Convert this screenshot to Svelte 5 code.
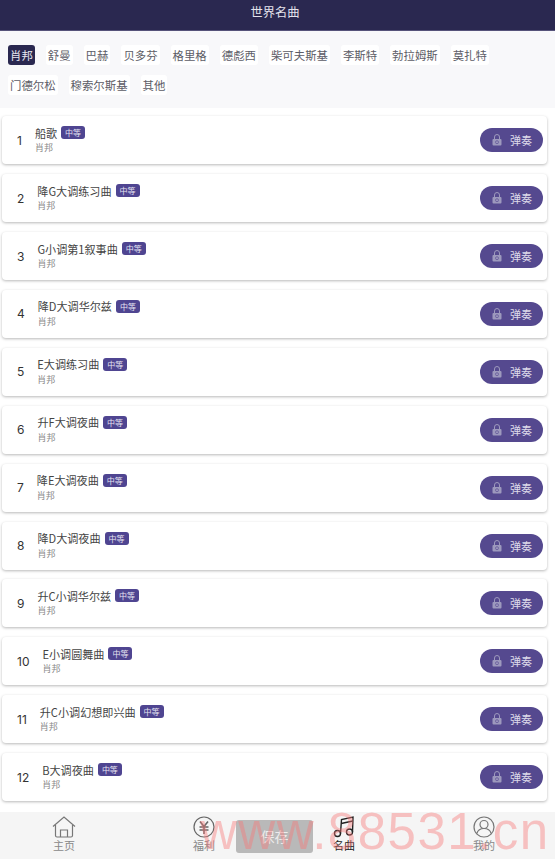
<script lang="ts">
  const composers = [
    '肖邦', '舒曼', '巴赫', '贝多芬', '格里格', '德彪西', '柴可夫斯基', '李斯特',
    '勃拉姆斯', '莫扎特', '门德尔松', '穆索尔斯基', '其他'
  ];

  const pieces = [
    '船歌', '降G大调练习曲', 'G小调第1叙事曲', '降D大调华尔兹', 'E大调练习曲', '升F大调夜曲',
    '降E大调夜曲', '降D大调夜曲', '升C小调华尔兹', 'E小调圆舞曲', '升C小调幻想即兴曲', 'B大调夜曲'
  ];

  let active = $state('肖邦');
</script>

<div class="page">
  <header class="topbar">世界名曲</header>

  <nav class="filters">
    {#each composers as name}
      <button class="chip" class:active={active === name} onclick={() => (active = name)}>{name}</button>
    {/each}
  </nav>

  <main class="list">
    {#each pieces as title, i}
      <div class="card">
        <span class="num">{i + 1}</span>
        <div class="info">
          <div class="title-row">
            <span class="title">{title}</span>
            <span class="level">中等</span>
          </div>
          <div class="author">肖邦</div>
        </div>
        <button class="play">
          <svg width="10" height="12" viewBox="0 0 10 12" fill="none">
            <path d="M2.500 5V3a2.500 2.500 0 0 1 5 0v2" stroke="#9d99bd" stroke-width="1" />
            <rect x="0.500" y="5" width="9" height="6.500" rx="1" fill="#9d99bd" />
            <circle cx="5" cy="8.200" r="1.500" stroke="#6a5f9d" stroke-width="0.900" />
          </svg>
          <span>弹奏</span>
        </button>
      </div>
    {/each}
  </main>

  <footer class="tabbar">
    <div class="tab">
      <svg width="24" height="22" viewBox="0 0 24 22" fill="none" stroke="#777" stroke-width="1.2">
        <path d="M1 10.500 12 1l11 9.500" />
        <path d="M3.500 9v10.500a1.500 1.500 0 0 0 1.500 1.500h14a1.500 1.500 0 0 0 1.500-1.500V9" />
        <path d="M8.500 21v-7h7v7" />
      </svg>
      <span>主页</span>
    </div>
    <div class="tab">
      <svg width="22" height="22" viewBox="0 0 22 22" fill="none" stroke="#666" stroke-width="1.2">
        <circle cx="11" cy="11" r="10" />
        <path d="M7 5.500l4 5 4-5M6.500 11h9M6.500 14h9M11 10.500V18" stroke-width="1.600" />
      </svg>
      <span>福利</span>
    </div>
    <div class="tab current">
      <svg width="22" height="22" viewBox="0 0 22 22" fill="none" stroke="#222" stroke-width="1.400">
        <circle cx="4.500" cy="17.500" r="3" />
        <circle cx="16.500" cy="16" r="3" />
        <path d="M7.500 17.500 8.500 3.500 20 1l-.5 15" />
        <path d="M8.200 7.500 19.800 5" />
      </svg>
      <span>名曲</span>
    </div>
    <div class="tab">
      <svg width="22" height="22" viewBox="0 0 22 22" fill="none" stroke="#777" stroke-width="1.2">
        <circle cx="11" cy="11" r="10" />
        <circle cx="11" cy="8.500" r="4" />
        <path d="M3.800 17.500c1-3.200 3.800-5 7.200-5s6.200 1.800 7.200 5" />
      </svg>
      <span>我的</span>
    </div>

    <div class="save">保存</div>
    <div class="watermark">www.88531.cn</div>
  </footer>
</div>

<style>
  :global(body) {
    margin: 0;
    background: #fff;
    overflow: hidden;
  }

  .page {
    display: flex;
    flex-direction: column;
    width: 555px;
    height: 859px;
    overflow: hidden;
    font-family: "Noto Sans CJK SC", "Noto Sans", sans-serif;
  }

  .topbar {
    flex: none;
    height: 30px;
    padding-right: 5px;
    border-bottom: 1px solid #56537a;
    background: #2a2850;
    color: #e4e3ec;
    font-size: 12.300px;
    line-height: 24px;
    text-align: center;
  }

  .filters {
    flex: none;
    display: flex;
    flex-wrap: wrap;
    align-content: flex-start;
    gap: 10px 11px;
    height: 63px;
    padding: 14px 8px 0;
    background: #f8f8fa;
  }

  .chip {
    height: 20px;
    padding: 0 2px;
    border: none;
    border-radius: 3px;
    background: #fff;
    color: #5c5c66;
    font-family: inherit;
    font-size: 11.400px;
    line-height: 20px;
    cursor: pointer;
  }

  .chip.active {
    background: #2a2850;
    color: #e8e7f0;
  }

  .list {
    flex: none;
    display: flex;
    flex-direction: column;
    gap: 9.900px;
    height: 704px;
    box-sizing: border-box;
    padding: 8.300px 8px 0 2px;
  }

  .card {
    flex: none;
    display: flex;
    align-items: center;
    height: 48px;
    padding: 0 4px 0 15px;
    border-radius: 4px;
    background: #fff;
    box-shadow: 0 1px 3px rgba(0, 0, 0, 0.28);
  }

  .num {
    margin-right: 13px;
    color: #333;
    font-family: Inter, sans-serif;
    font-size: 12px;
  }

  .info {
    flex: 1;
    margin-top: -2px;
  }

  .title-row {
    display: flex;
    align-items: center;
    gap: 4px;
    height: 17px;
  }

  .title {
    color: #444;
    font-size: 11.100px;
  }

  .level {
    width: 24px;
    height: 13px;
    border-radius: 3px;
    background: #4f4591;
    color: #e6e4f2;
    font-size: 8px;
    line-height: 13px;
    text-align: center;
  }

  .author {
    color: #8a8a8a;
    font-size: 9px;
    line-height: 13px;
  }

  .play {
    display: flex;
    align-items: center;
    gap: 8px;
    width: 63px;
    height: 24px;
    padding: 0 0 0 12px;
    border: none;
    border-radius: 12px;
    background: #55498f;
    color: #dedbea;
    font-family: inherit;
    font-size: 11px;
    cursor: pointer;
  }

  .tabbar {
    position: relative;
    flex: none;
    display: grid;
    grid-template-columns: repeat(4, 140px);
    height: 47px;
    margin-left: -6px;
    background: #f5f5f5;
  }

  .tab {
    display: flex;
    flex-direction: column;
    align-items: center;
    padding-top: 4px;
    color: #888;
    font-size: 11px;
    line-height: 14px;
  }

  .tab.current {
    color: #222;
  }

  .save {
    position: absolute;
    left: 242px;
    top: 8px;
    width: 77px;
    height: 33px;
    border-radius: 3px;
    background: #b9b9b9;
    color: #ececec;
    font-size: 14px;
    line-height: 33px;
    text-align: center;
  }

  .watermark {
    position: absolute;
    left: 206px;
    top: -10px;
    color: rgba(248, 120, 120, 0.42);
    font-family: "Liberation Sans", sans-serif;
    font-size: 51px;
    line-height: 60px;
    letter-spacing: 1.500px;
    white-space: nowrap;
    pointer-events: none;
  }
</style>
